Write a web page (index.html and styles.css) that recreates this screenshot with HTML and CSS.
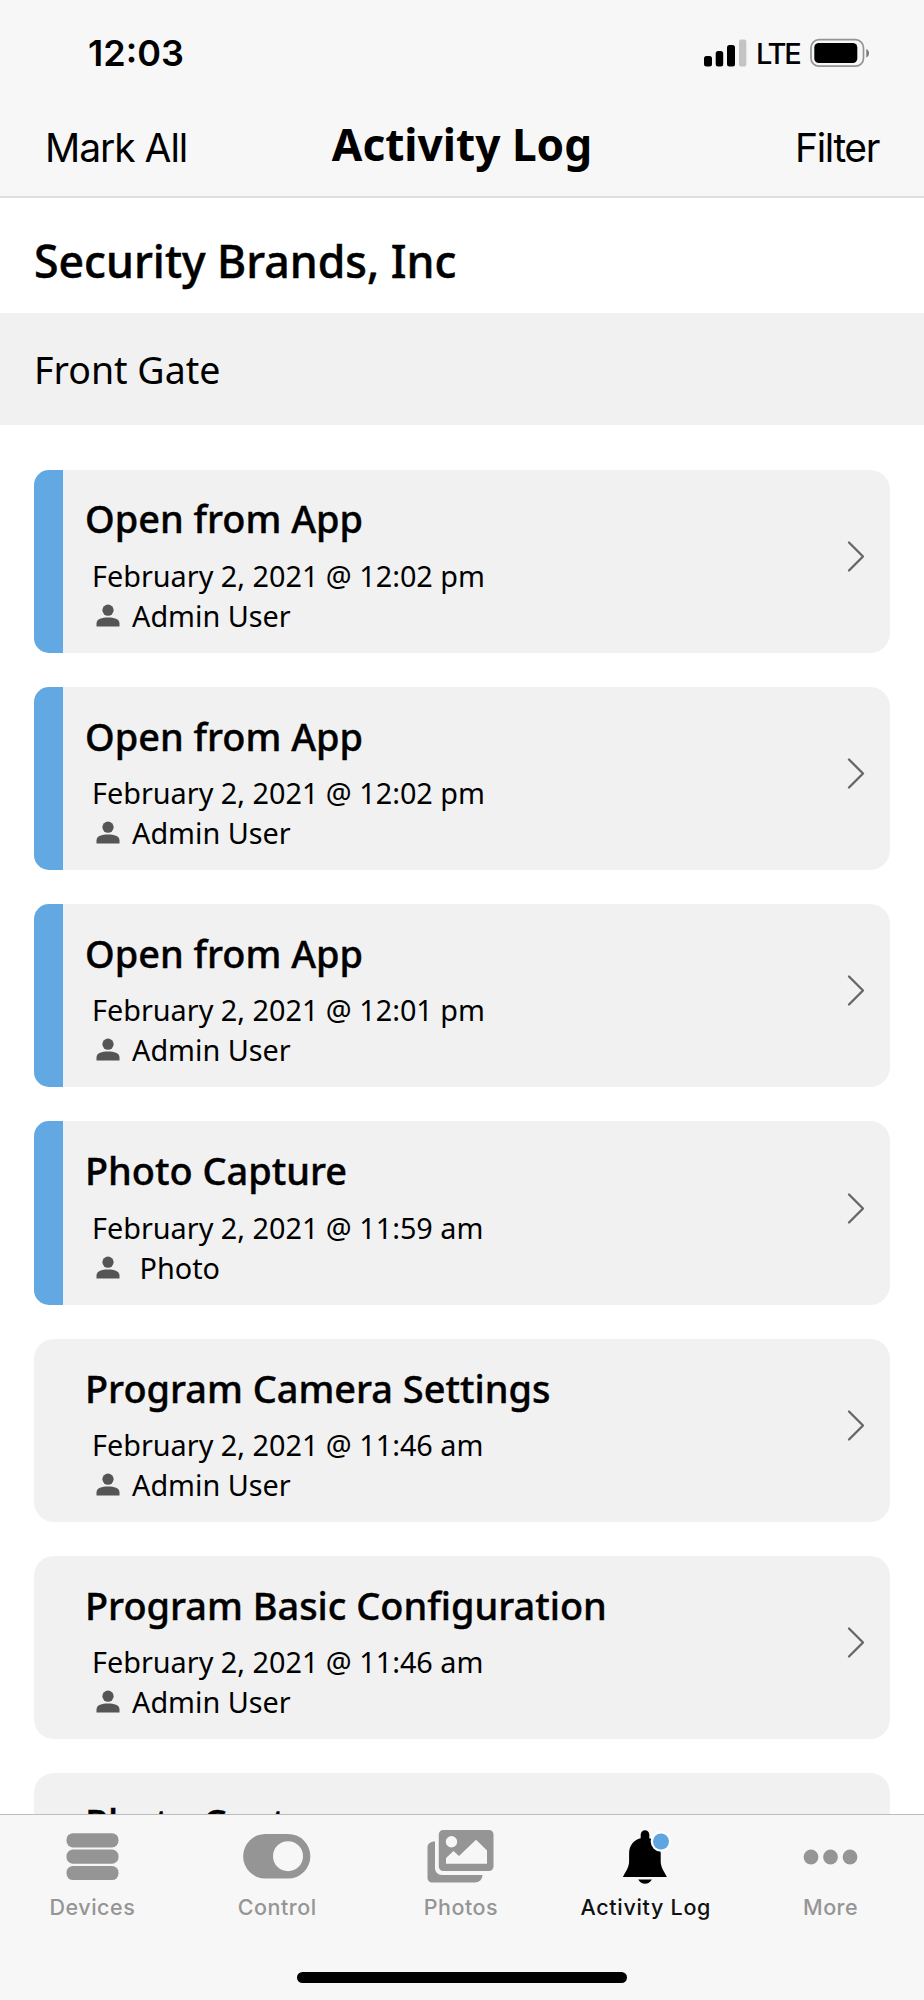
FILE: index.html
```html
<!DOCTYPE html>
<html lang="en">
<head>
<meta charset="utf-8">
<title>Activity Log</title>
<link rel="stylesheet" href="styles.css">
</head>
<body>
<svg width="0" height="0" class="defs">
  <symbol id="person" viewBox="0 0 24 24"><circle cx="12" cy="6.2" r="5.6"/><path d="M.5 22.6v-3C.5 15 6 13.600 12 13.600s11.500 1.400 11.500 6v3z"/></symbol>
  <symbol id="chevron" viewBox="0 0 20 34"><path d="M3 3.500 17 17.500 3 31.500" fill="none" stroke="#666" stroke-width="2.300" stroke-linecap="round" stroke-linejoin="round"/></symbol>
</svg>
<div class="app">
  <header class="header">
    <div class="status">
      <span class="clock">12:03</span>
      <div class="status-right">
        <svg class="signal" width="43" height="28" viewBox="0 0 43 28"><rect x="0" y="17" width="8" height="10.500" rx="2.500"/><rect x="11.700" y="12" width="7.500" height="15.500" rx="2.500"/><rect x="23" y="6" width="8" height="21.500" rx="2.500"/><rect x="35" y="0.500" width="7.300" height="27" rx="2" fill="#c4c4c4"/></svg>
        <span class="lte">LTE</span>
        <svg class="battery" width="60" height="30" viewBox="0 0 60 30"><rect x="1" y="1.700" width="52.500" height="26.500" rx="8" fill="none" stroke="#949494" stroke-width="1.700"/><rect x="4.300" y="5" width="43" height="20" rx="4.500"/><path d="M56.300 11c3.600 1.500 3.600 7 0 8.500z" fill="#777"/></svg>
      </div>
    </div>
    <nav class="nav">
      <span class="nav-action">Mark All</span>
      <h1 class="nav-title">Activity Log</h1>
      <span class="nav-action nav-end">Filter</span>
    </nav>
  </header>
  <main class="main">
    <h2 class="company">Security Brands, Inc</h2>
    <div class="gate">Front Gate</div>
    <div class="list">
      <article class="card unread"><div class="card-body"><h3 class="card-title">Open from App</h3><p class="date">February 2, 2021 @ 12:02 pm</p><p class="user"><svg class="person"><use href="#person"/></svg>Admin User</p></div><svg class="chevron"><use href="#chevron"/></svg></article>
      <article class="card unread"><div class="card-body"><h3 class="card-title">Open from App</h3><p class="date">February 2, 2021 @ 12:02 pm</p><p class="user"><svg class="person"><use href="#person"/></svg>Admin User</p></div><svg class="chevron"><use href="#chevron"/></svg></article>
      <article class="card unread"><div class="card-body"><h3 class="card-title">Open from App</h3><p class="date">February 2, 2021 @ 12:01 pm</p><p class="user"><svg class="person"><use href="#person"/></svg>Admin User</p></div><svg class="chevron"><use href="#chevron"/></svg></article>
      <article class="card unread"><div class="card-body"><h3 class="card-title">Photo Capture</h3><p class="date">February 2, 2021 @ 11:59 am</p><p class="user"><svg class="person"><use href="#person"/></svg>&nbsp;Photo</p></div><svg class="chevron"><use href="#chevron"/></svg></article>
      <article class="card"><div class="card-body"><h3 class="card-title">Program Camera Settings</h3><p class="date">February 2, 2021 @ 11:46 am</p><p class="user"><svg class="person"><use href="#person"/></svg>Admin User</p></div><svg class="chevron"><use href="#chevron"/></svg></article>
      <article class="card"><div class="card-body"><h3 class="card-title">Program Basic Configuration</h3><p class="date">February 2, 2021 @ 11:46 am</p><p class="user"><svg class="person"><use href="#person"/></svg>Admin User</p></div><svg class="chevron"><use href="#chevron"/></svg></article>
      <article class="card"><div class="card-body"><h3 class="card-title">Photo Capture</h3></div></article>
    </div>
  </main>
  <footer class="tabbar">
    <div class="tabs">
      <div class="tab"><svg class="tab-icon" viewBox="0 0 80 60"><rect x="14.500" y="6.200" width="52" height="14.200" rx="6.500"/><rect x="14.500" y="22.500" width="52" height="14.200" rx="6.500"/><rect x="14.500" y="38.900" width="52" height="14.200" rx="6.500"/></svg><span>Devices</span></div>
      <div class="tab"><svg class="tab-icon" viewBox="0 0 80 60"><path fill-rule="evenodd" d="M28.500 6.900H51a22.300 22.300 0 0 1 0 44.700H28.500a22.300 22.300 0 0 1 0-44.700zM51 14.200a15 15 0 1 0 0 30 15 15 0 0 0 0-30z"/></svg><span>Control</span></div>
      <div class="tab"><svg class="tab-icon" viewBox="1 0 80 60"><path fill-rule="evenodd" d="M22.300 3H68a4.500 4.500 0 0 1 4.500 4.500v32A4.500 4.500 0 0 1 68 44H22.300a4.500 4.500 0 0 1-4.500-4.500v-32A4.500 4.500 0 0 1 22.300 3zM30.500 9a5.700 5.700 0 1 0 0 11.400A5.700 5.700 0 0 0 30.500 9zM25 36.700h41V23.500L55 12.700 38 29 32.500 24 25 31z"/><path d="M14 14.500c-5 0-7.500 2.500-7.500 6V51a4.500 4.500 0 0 0 4.500 4.500h43c4 0 7.500-3 7.500-7.500H21c-4 0-7-3-7-7z"/></svg><span class="nudge">Photos</span></div>
      <div class="tab active"><svg class="tab-icon" viewBox="1.300 0 80 60"><path d="M35 7.500a4.300 4.300 0 0 1 8.600 0v3.800C50.500 13 55 19 55 26v8c0 7 3.500 10 6.200 16H17.200c2.700-6 6.200-9 6.200-16v-8c0-7 4.500-13 11.600-14.700zM32.500 52.400h13.700c-3 5.700-10.700 5.700-13.700 0z"/><circle cx="55.300" cy="14.500" r="10.300" fill="#fff"/><circle cx="55.300" cy="14.500" r="8" fill="#5ea6e2"/></svg><span class="nudge">Activity Log</span></div>
      <div class="tab"><svg class="tab-icon" viewBox="1 0 80 60"><circle cx="20" cy="30" r="7.400"/><circle cx="39.500" cy="30" r="7.400"/><circle cx="59" cy="30" r="7.400"/></svg><span class="nudge">More</span></div>
    </div>
    <div class="home"></div>
  </footer>
</div>
</body>
</html>
```
FILE: styles.css
```css
* { box-sizing: border-box; }
body { margin: 0; background: #fff; color: #000; font-family: "Noto Sans", sans-serif; }
h1, h2, h3, p { margin: 0; }
.defs { position: absolute; }
.app { width: 924px; height: 2000px; display: flex; flex-direction: column; overflow: hidden; }
.header { height: 198px; flex: none; background: #f7f7f7; border-bottom: 2px solid #dfdfdf; }
.status { height: 106px; padding: 0 54px 0 88px; display: flex; justify-content: space-between; align-items: center; }
.clock { font: 600 36px/44px Inter, sans-serif; }
.status-right { display: flex; align-items: center; }
.signal { margin-right: 9px; }
.lte { font: 500 29px/36px Inter, sans-serif; width: 54px; padding-top: 1px; letter-spacing: -2.200px; }
.nav { height: 90px; padding: 13px 45px 0; display: grid; grid-template-columns: 1fr auto 1fr; }
.nav-action { font: 400 39px/50px Inter, sans-serif; padding-top: 4px; letter-spacing: -1.050px; }
.nav-end { text-align: right; letter-spacing: -1.400px; }
.nav-title { font-size: 44.200px; line-height: 50px; font-weight: 700; }
.main { flex: 1; min-height: 0; overflow: hidden; }
.company { height: 115px; padding: 32.500px 34px 0; font-size: 44.600px; line-height: 60px; font-weight: 500; -webkit-text-stroke: .5px #000; }
.gate { height: 112px; padding: 1px 34px 0; background: #f1f1f1; font-size: 37.500px; line-height: 112px; }
.list { padding: 44.500px 34px 0; display: flex; flex-direction: column; gap: 34px; }
.card { height: 183.330px; flex: none; padding: 22.700px 24px 0 51px; background: #f1f1f1; border-radius: 20px; display: flex; justify-content: space-between; }
.unread { border-left: 29px solid #62a8e3; border-radius: 15px 20px 20px 15px; padding-left: 22px; }
.card-title { font-size: 37.900px; line-height: 52px; font-weight: 500; white-space: nowrap; -webkit-text-stroke: .4px #000; }
.date { margin-top: 11.400px; padding-left: 7px; font-size: 28.800px; line-height: 40px; }
.user { padding-left: 11px; font-size: 28.800px; line-height: 40px; display: flex; align-items: center; }
.person { width: 24px; height: 24px; fill: #555; margin-right: 12px; }
.chevron { width: 20px; height: 34px; margin-top: 46.500px; }
.tabbar { height: 186px; flex: none; background: #f7f7f7; border-top: 1px solid #bdbdbd; display: flex; flex-direction: column; align-items: center; }
.tabs { width: 100%; height: 156px; padding-top: 12px; display: grid; grid-template-columns: repeat(5, 1fr); }
.tab { display: flex; flex-direction: column; align-items: center; font: 500 21.500px/30px Inter, sans-serif; letter-spacing: .5px; color: #959595; }
.tab-icon { width: 80px; height: 60px; fill: #959595; margin-bottom: 5px; }
.nudge { padding-right: 2px; }
.active { color: #111; letter-spacing: .7px; }
.active .tab-icon { fill: #000; }
.home { width: 330px; height: 11px; margin-top: 1px; border-radius: 6px; background: #000; }
```
